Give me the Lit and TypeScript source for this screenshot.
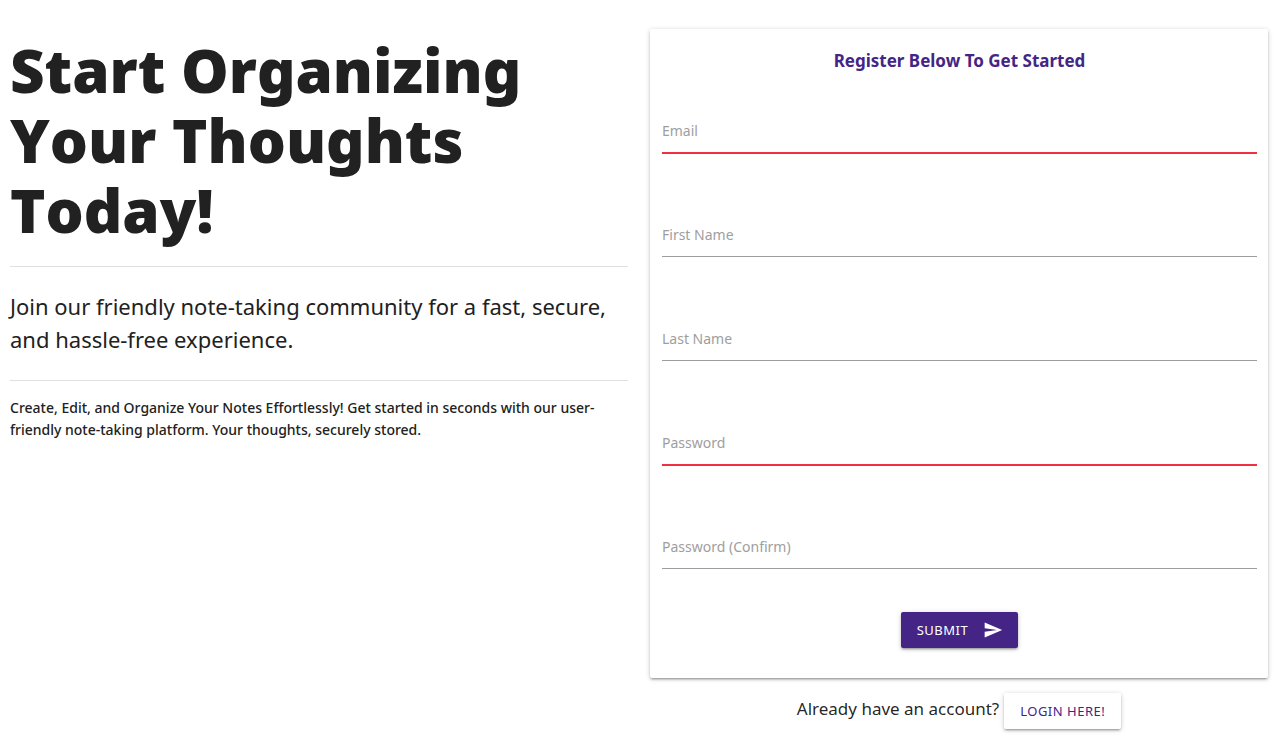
import { LitElement, html, css } from "lit";
import { customElement, property } from "lit/decorators.js";
import { classMap } from "lit/directives/class-map.js";

interface Field {
  id: string;
  label: string;
  type: string;
  invalid: boolean;
}

const FIELDS: Field[] = [
  { id: "email", label: "Email", type: "email", invalid: true },
  { id: "first-name", label: "First Name", type: "text", invalid: false },
  { id: "last-name", label: "Last Name", type: "text", invalid: false },
  { id: "password", label: "Password", type: "password", invalid: true },
  { id: "password-confirm", label: "Password (Confirm)", type: "password", invalid: false },
];

@customElement("register-form")
export class RegisterForm extends LitElement {
  @property({ attribute: false }) fields: Field[] = FIELDS;

  static styles = css`
    :host {
      display: block;
    }
    .card {
      box-sizing: border-box;
      padding: 16px 11px 30px 12px;
      border-radius: 2px;
      background: #fff;
      box-shadow: 0 2px 2px 0 rgba(0, 0, 0, 0.14), 0 3px 1px -2px rgba(0, 0, 0, 0.12),
        0 1px 5px 0 rgba(0, 0, 0, 0.2);
    }
    .title {
      margin: 0 0 30px;
      color: #442585;
      font-size: 17px;
      font-weight: 700;
      line-height: 32px;
      text-align: center;
    }
    .field {
      display: grid;
      margin-bottom: 58px;
    }
    .field:last-of-type {
      margin-bottom: 43px;
    }
    .label,
    .input {
      grid-area: 1 / 1;
    }
    .label {
      z-index: 1;
      padding-top: 12px;
      color: #9e9e9e;
      font-size: 14px;
      line-height: 24px;
      pointer-events: none;
    }
    .input {
      box-sizing: border-box;
      width: 100%;
      height: 46px;
      padding: 0;
      border: 0;
      border-bottom: 1px solid #9e9e9e;
      border-radius: 0;
      outline: 0;
      background: transparent;
      font: inherit;
    }
    .input.invalid {
      border-bottom-color: #f03042;
      box-shadow: 0 1px 0 0 #f03042;
    }
    .actions {
      display: flex;
      justify-content: center;
    }
    .submit {
      display: flex;
      align-items: center;
      gap: 15px;
      height: 36px;
      padding: 0 15px 0 16px;
      border: 0;
      border-radius: 2px;
      background: #442585;
      color: #fff;
      font-family: inherit;
      font-size: 13px;
      letter-spacing: 0.5px;
      text-transform: uppercase;
      box-shadow: 0 2px 2px 0 rgba(0, 0, 0, 0.14), 0 3px 1px -2px rgba(0, 0, 0, 0.12),
        0 1px 5px 0 rgba(0, 0, 0, 0.2);
      cursor: pointer;
    }
    .icon {
      width: 20px;
      height: 20px;
      fill: currentColor;
    }
  `;

  render() {
    return html`
      <form class="card" novalidate @submit=${(e: Event) => e.preventDefault()}>
        <h2 class="title">Register Below To Get Started</h2>
        ${this.fields.map(
          (f) => html`
            <div class="field">
              <label class="label" for=${f.id}>${f.label}</label>
              <input
                class=${classMap({ input: true, invalid: f.invalid })}
                id=${f.id}
                name=${f.id}
                type=${f.type}
              />
            </div>
          `
        )}
        <footer class="actions">
          <button class="submit" type="submit">
            Submit
            <svg class="icon" viewBox="0 0 24 24" aria-hidden="true">
              <path d="M2.01 21L23 12 2.01 3 2 10l15 2-15 2z" />
            </svg>
          </button>
        </footer>
      </form>
    `;
  }
}

@customElement("app-root")
export class AppRoot extends LitElement {
  static styles = css`
    :host {
      display: block;
      font-family: "Noto Sans", "Open Sans", sans-serif;
      color: rgba(0, 0, 0, 0.87);
    }
    .page {
      display: grid;
      grid-template-columns: 1fr 1fr;
      gap: 22px;
      align-items: start;
      padding: 29px 16px 10px 10px;
    }
    .intro {
      padding-top: 6px;
    }
    .headline {
      margin: 0;
      padding-bottom: 21px;
      border-bottom: 1px solid #e0e0e0;
      font-size: 60px;
      font-weight: 900;
      font-kerning: none;
      line-height: 70px;
      color: #212121;
    }
    .lead {
      margin: 0;
      padding: 23px 0 24px;
      border-bottom: 1px solid #e0e0e0;
      font-size: 22px;
      font-weight: 400;
      line-height: 33px;
      color: #212121;
    }
    .detail {
      margin: 16px 0 0;
      font-size: 14px;
      font-weight: 500;
      line-height: 22px;
      color: #212121;
    }
    .account {
      display: flex;
      justify-content: center;
      align-items: center;
      gap: 5px;
      margin-top: 15px;
      font-size: 17px;
      line-height: 32px;
    }
    .prompt {
      padding-bottom: 4px;
    }
    .login {
      padding: 0 16px;
      border-radius: 2px;
      color: #442585;
      font-size: 13px;
      line-height: 36px;
      letter-spacing: 0.5px;
      text-decoration: none;
      text-transform: uppercase;
      box-shadow: 0 2px 2px 0 rgba(0, 0, 0, 0.14), 0 3px 1px -2px rgba(0, 0, 0, 0.12),
        0 1px 5px 0 rgba(0, 0, 0, 0.2);
    }
  `;

  render() {
    return html`
      <main class="page">
        <section class="intro">
          <h1 class="headline">Start Organizing Your Thoughts Today!</h1>
          <p class="lead">
            Join our friendly note-taking community for a fast, secure, and hassle-free experience.
          </p>
          <p class="detail">
            Create, Edit, and Organize Your Notes Effortlessly! Get started in seconds with our
            user-friendly note-taking platform. Your thoughts, securely stored.
          </p>
        </section>
        <section>
          <register-form></register-form>
          <div class="account">
            <span class="prompt">Already have an account?</span>
            <a class="login" href="#login">Login Here!</a>
          </div>
        </section>
      </main>
    `;
  }
}
